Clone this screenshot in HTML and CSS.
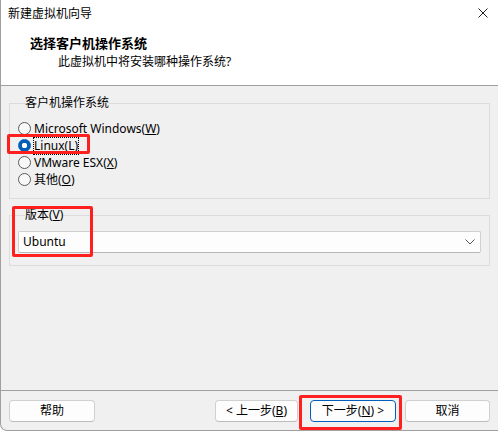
FILE: index.html
```html
<!DOCTYPE html>
<html lang="zh-CN">
    <head>
        <meta charset="utf-8">
        <title>新建虚拟机向导</title>
        <link rel="stylesheet" href="styles.css">
    </head>
    <body>
        <div class="window">
            <div class="top">
                <div class="titlebar">
                    <span>新建虚拟机向导</span>
                    <svg class="close" width="10" height="10" viewBox="0 0 10 10">
                        <path d="M0.5 0.5 L9.5 9.5 M9.5 0.5 L0.5 9.5" />
                    </svg>
                </div>
                <div class="header">
                    <h1>选择客户机操作系统</h1>
                    <p>此虚拟机中将安装哪种操作系统?</p>
                </div>
            </div>

            <div class="body">
                <fieldset class="group os">
                    <legend>客户机操作系统</legend>
                    <div class="radio"><span class="dot"></span>Microsoft Windows(<u>W</u>)</div>
                    <div class="radio checked"><span class="dot"></span><span class="focus">Linux(<u>L</u>)</span></div>
                    <div class="radio"><span class="dot"></span>VMware ESX(<u>X</u>)</div>
                    <div class="radio"><span class="dot"></span>其他(<u>O</u>)</div>
                </fieldset>

                <fieldset class="group version">
                    <legend>版本(<u>V</u>)</legend>
                    <div class="combo">
                        <span>Ubuntu</span>
                        <svg class="chevron" width="10" height="6" viewBox="0 0 10 6">
                            <path d="M0.5 0.5 L5 5 L9.5 0.5" />
                        </svg>
                    </div>
                </fieldset>
            </div>

            <div class="footer">
                <button class="btn help">帮助</button>
                <div class="nav">
                    <button class="btn prev">&lt; 上一步(<u>B</u>)</button>
                    <button class="btn next">下一步(<u>N</u>) &gt;</button>
                    <button class="btn cancel">取消</button>
                </div>
            </div>

            <!-- annotation boxes -->
            <div class="mark mark-linux"></div>
            <div class="mark mark-version"></div>
            <div class="mark mark-next"></div>
        </div>
    </body>
</html>
```

FILE: styles.css
```css
*, *::before, *::after {
    box-sizing: border-box;
}
body, h1, p {
    margin: 0;
}

:root {
    --face: #f0f0f0;
    --line: #a0a0a0;
    --group: #dcdcdc;
    --accent: #005fb8;
    --mark: #ff1f1f;
}

body {
    font-family: "Noto Sans", "Noto Sans CJK SC", sans-serif;
    font-size: 12px;
    color: #000;
    background: #fff;
}

.window {
    position: relative;
    width: 498px;
    height: 431px;
    display: flex;
    flex-direction: column;
    background: var(--face);
    border-left: 1px solid var(--line);
    border-bottom: 1px solid var(--line);
    border-bottom-left-radius: 7px;
    overflow: hidden;
}

.top {
    height: 86px;
    background: #fff;
    border-bottom: 1px solid var(--line);
}

.titlebar {
    height: 28px;
    display: flex;
    align-items: center;
    justify-content: space-between;
    padding: 0 10px 0 7px;
    line-height: 16px;
}

.close {
    margin-top: -2px;
}

.close path {
    stroke: #222;
    stroke-width: 1;
    fill: none;
}

.header {
    padding: 7px 0 0 29px;
    line-height: 16px;
}

.header h1 {
    font-size: 13px;
    font-weight: bold;
}

.header p {
    margin-top: 3px;
    padding-left: 28px;
}

.body {
    flex: 1;
    padding-top: 9px;
}

.group {
    margin: 0 8px 8px 8px;
    border: 1px solid var(--group);
    min-width: 0;
}

.group legend {
    padding: 0;
    margin-left: 7px;
    line-height: 16px;
}

.os {
    padding: 9px 8px 10px 8px;
}

.radio {
    display: flex;
    align-items: center;
    height: 17px;
    line-height: 16px;
}

.dot {
    width: 13px;
    height: 13px;
    margin-right: 3px;
    border: 1px solid #5a5a5a;
    border-radius: 50%;
    background: #f8f8f8;
    flex-shrink: 0;
}

.radio.checked .dot {
    border-color: var(--accent);
    background: radial-gradient(circle, #fff 0 2.5px, var(--accent) 3px);
}

.focus {
    outline: 1px dotted #000;
    outline-offset: 0;
}

.version {
    padding: 8px 8px 12px 8px;
}

.combo {
    height: 22px;
    display: flex;
    align-items: center;
    justify-content: space-between;
    padding: 0 5px 0 4px;
    background: #fdfdfd;
    border: 1px solid #d0d0d0;
    border-bottom-color: #b8b8b8;
    border-radius: 2px;
    line-height: 16px;
}

.chevron path {
    stroke: #555;
    stroke-width: 1;
    fill: none;
}

.footer {
    height: 40px;
    border-top: 1px solid var(--line);
    display: flex;
    justify-content: space-between;
    align-items: flex-start;
    padding: 9px 8px 0 8px;
}

.nav {
    display: flex;
}

.btn {
    font: inherit;
    height: 22px;
    padding: 0;
    line-height: 16px;
    color: #000;
    background: #fdfdfd;
    border: 1px solid #d0d0d0;
    border-bottom-color: #bcbcbc;
    border-radius: 4px;
}

.help {
    width: 86px;
}

.prev {
    width: 83px;
}

.next {
    width: 86px;
    margin-left: 12px;
    border-color: var(--accent);
}

.cancel {
    width: 85px;
    margin-left: 9px;
}

.mark {
    position: absolute;
    border: 3px solid var(--mark);
    border-radius: 2px;
}

.mark-linux {
    left: 6px;
    top: 134px;
    width: 83px;
    height: 20px;
}

.mark-version {
    left: 11px;
    top: 206px;
    width: 81px;
    height: 51px;
}

.mark-next {
    left: 298px;
    top: 395px;
    width: 103px;
    height: 35px;
}
```
